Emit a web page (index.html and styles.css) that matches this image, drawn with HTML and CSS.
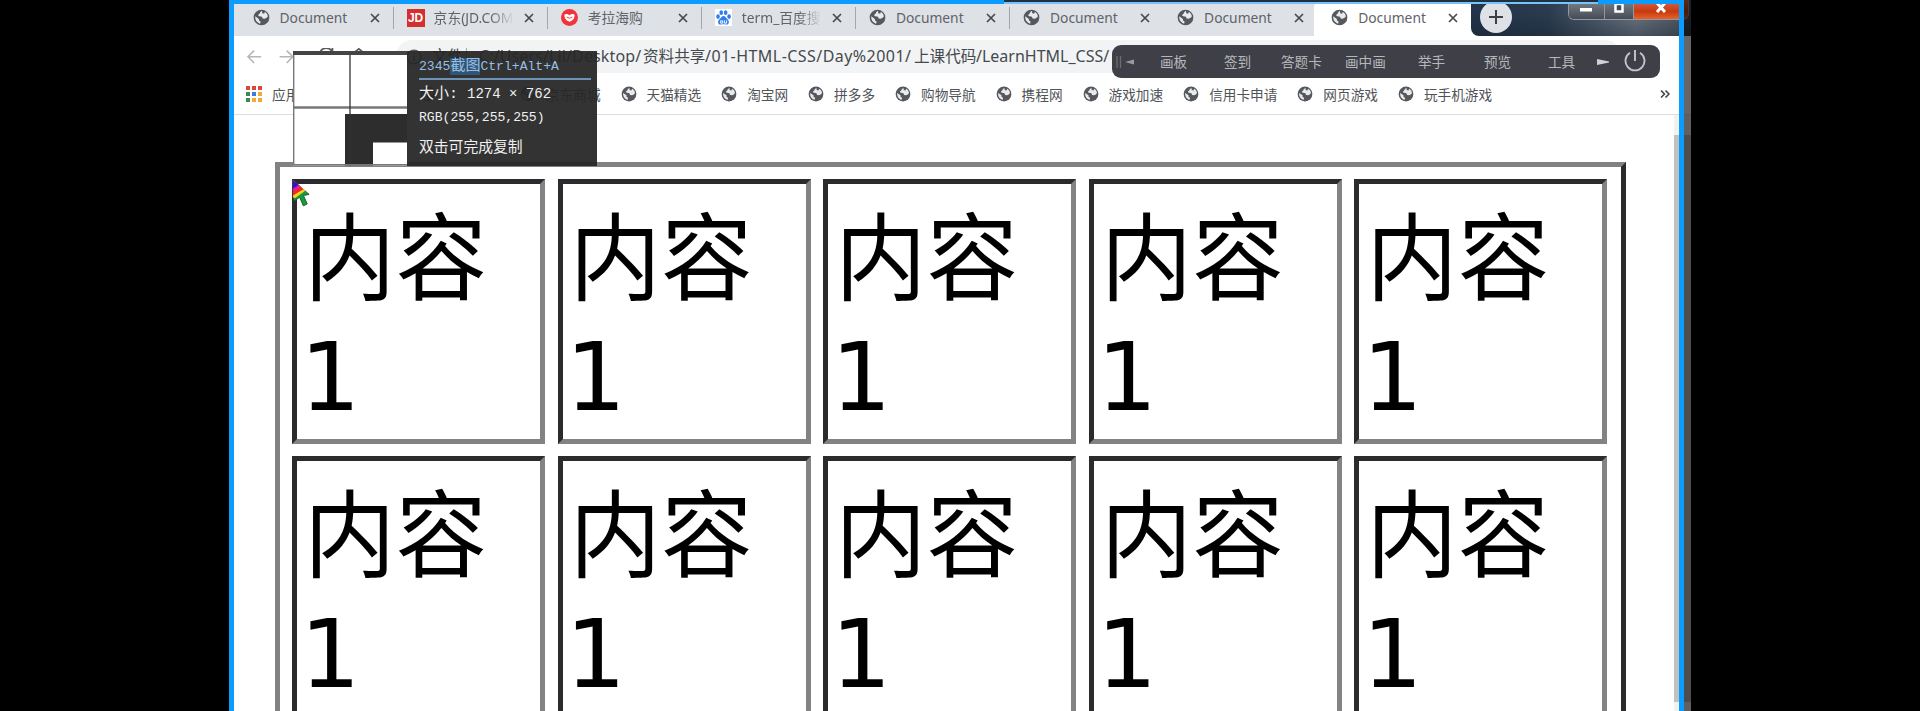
FILE: index.html
```html
<!DOCTYPE html>
<html lang="zh">
<head>
<meta charset="utf-8">
<title>Document</title>
<link rel="stylesheet" href="styles.css">
</head>
<body>
<svg width="0" height="0" class="defs">
  <symbol id="globe" viewBox="0 0 18 18"><circle cx="9" cy="9" r="8.3" fill="#55585c"/><path d="M9.500 2.200C7 3 7.600 5 6.300 5.600 5 6.200 5.400 7.500 6.800 7.600L9.500 8.200 10.200 10 12.500 10.300C14.500 9.500 15.500 9 15.700 7.500 15.300 5 13.500 3.500 12.500 3.200L11.800 5 9.800 4.600ZM2.400 7.800C2 11.500 4.200 14.700 7.600 15.500L8 13.200 6.300 12.300 6.200 10.500Z" fill="#e8eaed"/></symbol>
  <symbol id="x" viewBox="0 0 10 10"><path d="M1 1L9 9M9 1L1 9" stroke="#46494d" stroke-width="1.700"/></symbol>
</svg>
<div class="screen">
  <div class="desktop">
    <div class="tabs">
      <div class="tab"><svg class="fav"><use href="#globe"/></svg><span class="tt">Document</span><svg class="close"><use href="#x"/></svg></div>
      <div class="tab"><span class="fav jd">JD</span><span class="tt fade">京东(JD.COM)</span><svg class="close"><use href="#x"/></svg></div>
      <div class="tab"><svg class="fav" viewBox="0 0 18 18"><circle cx="9" cy="9" r="9" fill="#f1333b"/><path d="M3.500 6Q6 4.500 9 6.500 12 4.500 14.500 6 14.500 12 9 13.500 3.500 12 3.500 6Z" fill="#fff"/><path d="M6 8.500Q9 11 12 8.500" stroke="#f1333b" fill="none"/></svg><span class="tt">考拉海购</span><svg class="close"><use href="#x"/></svg></div>
      <div class="tab"><svg class="fav" viewBox="0 0 18 18"><path fill="#fff" d="M0 0H18V18H0Z"/><g fill="#2f7df0"><ellipse cx="3.200" cy="8" rx="1.900" ry="2.500"/><ellipse cx="6.600" cy="3.900" rx="1.900" ry="2.500"/><ellipse cx="11.300" cy="3.900" rx="1.900" ry="2.500"/><ellipse cx="14.900" cy="8" rx="1.900" ry="2.500"/><path d="M9 7.300C11 7.300 11.500 9.500 13.500 11 15.500 12.800 15 16.800 11.800 16.500 10 16.200 8 16.200 6.300 16.500 3 16.800 2.500 12.800 4.500 11 6.500 9.500 7 7.300 9 7.300Z"/></g><path d="M6 12.500H8.200V15H6ZM10 12V15H12.300V12" fill="none" stroke="#fff"/></svg><span class="tt fade">term_百度搜</span><svg class="close"><use href="#x"/></svg></div>
      <div class="tab"><svg class="fav"><use href="#globe"/></svg><span class="tt">Document</span><svg class="close"><use href="#x"/></svg></div>
      <div class="tab"><svg class="fav"><use href="#globe"/></svg><span class="tt">Document</span><svg class="close"><use href="#x"/></svg></div>
      <div class="tab last"><svg class="fav"><use href="#globe"/></svg><span class="tt">Document</span><svg class="close"><use href="#x"/></svg></div>
      <div class="tab active"><svg class="fav"><use href="#globe"/></svg><span class="tt">Document</span><svg class="close"><use href="#x"/></svg></div>
      <div class="caption">
        <svg class="newtab" viewBox="0 0 32 32"><circle cx="16" cy="16" r="16" fill="#dee1e6"/><path d="M16 9V23M9 16H23" stroke="#3c4043" stroke-width="2"/></svg>
        <div class="winbtns">
          <span class="wb"><svg viewBox="0 0 14 12"><path d="M1 6H13V9.500H1Z" fill="#fff"/></svg></span>
          <span class="wb"><svg viewBox="0 0 14 12"><path d="M3.500 2H10.500V9.500H3.500Z" fill="#444b55" stroke="#fff" stroke-width="2.500"/></svg></span>
          <span class="wb red"><svg viewBox="0 0 14 12"><path d="M3 1L11 10M11 1L3 10" stroke="#fff" stroke-width="3"/></svg></span>
        </div>
      </div>
    </div>
    <div class="address">
      <svg class="nav" viewBox="0 0 170 20"><g fill="none" stroke="#b4b6b9" stroke-width="1.800"><path d="M17 10H2M9 3L2 10 9 17"/><path d="M38 10H53M46 3L53 10 46 17"/></g><g fill="none" stroke="#55585c" stroke-width="2"><path d="M97 3A8 8 0 1 0 98 12M98 0V6H92"/><path d="M118 9L128 1 138 9M121 8V17H135V8"/></g></svg>
      <div class="omnibox">
        <svg class="info" viewBox="0 0 16 16"><circle cx="8" cy="8" r="6.800" fill="none" stroke="#55585c" stroke-width="1.600"/><path d="M8 7V12M8 4V5.600" stroke="#55585c" stroke-width="1.700"/></svg>
        <span class="file">文件</span><span class="bar"></span>
        <span class="u1">C:/Users/Lil/Desktop/</span><span class="u2">资料共享</span><span class="u3">/01-HTML-CSS/Day%2001/</span><span class="u4">上课代码</span><span class="u5">/LearnHTML_CSS/</span>
      </div>
      <svg class="dots" viewBox="0 0 4 16"><path d="M0 0H3.500V3.500H0ZM0 6H3.500V9.500H0ZM0 12H3.500V15.500H0Z" fill="#55585c"/></svg>
    </div>
    <div class="bookmarks">
      <div class="bm apps"><svg viewBox="0 0 16 16"><path d="M0 0h4v4H0ZM6 0h4v4H6ZM12 0h4v4h-4Z" fill="#d9483b"/><path d="M0 6h4v4H0ZM0 12h4v4H0Z" fill="#3b8a54"/><path d="M6 6h4v4H6Z" fill="#3a7de0"/><path d="M12 6h4v4h-4ZM6 12h4v4H6ZM12 12h4v4h-4Z" fill="#efaa38"/></svg>应用</div>
      <div class="bm"><svg><use href="#globe"/></svg></div>
      <div class="bm jdm"><svg><use href="#globe"/></svg>京东商城</div>
      <div class="bm"><svg><use href="#globe"/></svg>天猫精选</div>
      <div class="bm"><svg><use href="#globe"/></svg>淘宝网</div>
      <div class="bm"><svg><use href="#globe"/></svg>拼多多</div>
      <div class="bm"><svg><use href="#globe"/></svg>购物导航</div>
      <div class="bm"><svg><use href="#globe"/></svg>携程网</div>
      <div class="bm"><svg><use href="#globe"/></svg>游戏加速</div>
      <div class="bm"><svg><use href="#globe"/></svg>信用卡申请</div>
      <div class="bm"><svg><use href="#globe"/></svg>网页游戏</div>
      <div class="bm"><svg><use href="#globe"/></svg>玩手机游戏</div>
      <svg class="more" viewBox="0 0 10 8"><path d="M1 .5L4.500 4 1 7.500M5.500 .5L9 4 5.500 7.500" fill="none" stroke="#3c4043" stroke-width="1.500"/></svg>
    </div>
    <div class="page">
      <div class="grid">
        <div class="cell"><p>内容</p><p class="n">1</p></div>
        <div class="cell"><p>内容</p><p class="n">1</p></div>
        <div class="cell"><p>内容</p><p class="n">1</p></div>
        <div class="cell"><p>内容</p><p class="n">1</p></div>
        <div class="cell"><p>内容</p><p class="n">1</p></div>
        <div class="cell"><p>内容</p><p class="n">1</p></div>
        <div class="cell"><p>内容</p><p class="n">1</p></div>
        <div class="cell"><p>内容</p><p class="n">1</p></div>
        <div class="cell"><p>内容</p><p class="n">1</p></div>
        <div class="cell"><p>内容</p><p class="n">1</p></div>
      </div>
      <div class="scroll"><div class="thumb"></div></div>
    </div>

    <div class="shade"></div>
    <div class="frame"></div>
    <div class="topline"></div>

    <div class="magnifier">
      <svg class="lens" viewBox="0 0 114 114"><path d="M0 0H114V114H0Z" fill="#fff"/><path d="M52 62.500H114V91H80V114H52Z" fill="#2d2d2d"/><path d="M0 56H114" stroke="#777" stroke-width="2.500"/><path d="M57 0V114" stroke="#333" stroke-width="1.300"/><path d="M.6 0V114M0 113.300H114" fill="none" stroke="#777" stroke-width="1.600"/><path d="M0 1.500H114" stroke="#444" stroke-width="4"/></svg>
      <div class="tip">
        <p class="t1">2345<b>截图</b>Ctrl+Alt+A</p>
        <p class="t2">大小: <span>1274 × 762</span></p>
        <p class="t3">RGB(255,255,255)</p>
        <p class="t4">双击可完成复制</p>
      </div>
    </div>
    <svg class="cursor" viewBox="0 0 20 30"><path d="M1 1L18 16 12 17 16 26 12 28 8 19 2 23Z" fill="#169b3d" stroke="#155c28"/><path d="M1 1L14 12 3 20 1 19Z" fill="#f5d020"/><path d="M1 1L12 10.500 1 17Z" fill="#f0281e"/><path d="M1 1L9.500 8.500 1 13Z" fill="#e418b0"/><path d="M1 1L7 6 1 10Z" fill="#2a18c8"/></svg>

    <div class="toolbar">
      <svg class="grip" viewBox="0 0 20 12"><path d="M1 0V12M4.500 0V12" stroke="#6b6c72" stroke-width="1.300"/><path d="M9 6L18 3.500V8.500Z" fill="#9a9ba0"/></svg>
      <span class="w1">画板</span><span class="w2">签到</span><span class="w3">答题卡</span><span class="w4">画中画</span><span class="w5">举手</span><span class="w6">预览</span><span class="w7">工具</span>
      <svg class="play" viewBox="0 0 12 8"><path d="M0 1L12 3.500V4.500L0 7Z" fill="#d0d1d4"/></svg>
      <svg class="power" viewBox="0 0 22 22"><path d="M6 2.800A9.500 9.500 0 1 0 16 2.800M11 0V11" fill="none" stroke="#c4c5c9" stroke-width="1.900"/></svg>
    </div>
  </div>
</div>
</body>
</html>
```

FILE: styles.css
```css
* { box-sizing: border-box; }
body { margin: 0; background: #000; overflow: hidden; font-family: "Noto Sans", "Noto Sans CJK SC", sans-serif; }
p { margin: 0; }
.defs { position: absolute; }
.screen { height: 711px; padding-left: 229px; }
.desktop { position: relative; width: 1462px; height: 711px; background: #fff; overflow: hidden; display: flex; flex-direction: column; }

.tabs { display: flex; height: 36px; background: #dee1e6; padding-left: 6px; flex: none; }
.tab { width: 154.100px; height: 36px; display: flex; align-items: center; padding: 0 13px 1px 17.500px; position: relative; flex: none; }
.tab:not(.last):not(.active)::after { content: ""; position: absolute; right: -5px; top: 7px; width: 1.500px; height: 22px; background: #a3a6ab; }
.tab.active { background: #fff; width: 157px; border-radius: 8px 8px 0 0; }
.fav { width: 17px; height: 17px; flex: none; margin-right: 10px; }
.jd { background: #d42f2c; color: #fff; font: bold 12px/18px "Liberation Sans", sans-serif; text-align: center; width: 18px; height: 18px; margin-right: 9px; }
.tt { width: 80px; font: 13.800px/20px "Noto Sans", "Noto Sans CJK SC", sans-serif; color: #606368; white-space: nowrap; overflow: hidden; flex: none; padding-top: 1px; }
.fade { -webkit-mask-image: linear-gradient(90deg, #000 70%, transparent 100%); mask-image: linear-gradient(90deg, #000 70%, transparent 100%); }
.close { width: 10px; height: 10px; margin-left: 10px; flex: none; }

.caption { flex: 1; height: 36px; background: linear-gradient(180deg, #141e2b00 30%, #141e2b66), linear-gradient(90deg, #22344a, #2b3c50 35%, #6d7784 75%, #4a535f); border-radius: 0 0 0 8px; display: flex; align-items: flex-start; }
.tabs { background: linear-gradient(90deg, #dee1e6 1230px, #fff 1230px); }
.tab.last { background: linear-gradient(#fff 0 0) right / 20px 100% no-repeat; }
.tab.last::before { content: ""; position: absolute; z-index: -1; inset: 0; }
.tab.last { background: #dee1e6; border-radius: 0 0 8px 0; }
.newtab { width: 32px; height: 32px; margin: 1px 0 0 9px; }
.winbtns { display: flex; margin-left: 56px; height: 20px; border: 1px solid #9298a0; border-top: 0; border-radius: 0 0 6px 6px; overflow: hidden; }
.wb { width: 36px; display: flex; align-items: center; justify-content: center; background: linear-gradient(#7b828b, #454c57); border-right: 1px solid #9298a0; }
.wb:nth-child(2) { width: 29px; }
.wb.red { width: 54px; background: linear-gradient(#d9664d, #c73a10 60%, #e5622a); border: 0; }
.wb svg { width: 14px; height: 12px; margin-top: -3px; }

.address { height: 40px; display: flex; align-items: center; padding-left: 17px; flex: none; }
.nav { width: 150px; height: 17.600px; margin-top: 2px; flex: none; }
.omnibox { display: flex; align-items: center; height: 33px; width: 1225px; border-radius: 17px; background: #f1f3f4; padding: 1px 0 0 10px; font-size: 16px; line-height: 33px; color: #46494d; white-space: nowrap; }
.info { width: 16px; height: 16px; margin-right: 10px; }
.file { width: 34px; font-size: 15.500px; }
.bar { width: 1px; height: 17px; background: #aaa; margin-right: 12px; }
.u1 { width: 164px; letter-spacing: .12px; }
.u2 { width: 62px; font-size: 15.600px; }
.u3 { width: 209px; letter-spacing: .45px; }
.u4 { width: 62px; font-size: 15.600px; }
.dots { width: 4px; height: 15px; margin-left: 33px; margin-top: 4px; }

.bookmarks { height: 39px; display: flex; align-items: center; padding: 0 16px 2px 17px; gap: 20px; font: 13.650px/20px "Noto Sans CJK SC", sans-serif; color: #505357; border-bottom: 1px solid #dcdee2; flex: none; }
.bm { display: flex; gap: 10px; align-items: center; white-space: nowrap; }
.bm svg { width: 16px; height: 16px; }
.apps { width: 154px; }
.jdm { margin-left: 64px; }
.more { width: 10px; height: 8px; margin-left: auto; margin-right: 5px; }

.page { flex: 1; display: flex; justify-content: space-between; overflow: hidden; }
.grid { display: grid; grid-template-columns: repeat(5, 253.300px); grid-auto-rows: 264.500px; gap: 12px 12.250px; margin: 47px 0 0 46px; padding: 12px 12px 0 12px; height: 860px; border: 5px solid #828282; border-right-color: #2b2b2d; width: 1351px; flex: none; }
.cell { border: 5px solid; border-color: #2b2b2d #848284 #848284 #2b2b2d; padding-left: 7px; padding-top: 4px; color: #000; }
.cell p { font: 91.500px/126px "Noto Sans CJK SC", sans-serif; height: 126px; transform: scaleY(1.045); }
.cell .n { font: 95px/126px "DejaVu Sans", sans-serif; margin-left: -4px; transform: none; }
.scroll { width: 17px; background: #f1f1f1; padding-top: 20px; }
.thumb { height: 567px; background: #c1c1c1; }

.shade { position: absolute; left: 1454px; top: 0; width: 8px; height: 711px; background: rgba(0,0,0,.6); }
.frame { position: absolute; left: 0; top: 0; width: 1455px; height: 720px; border: 5.500px solid #0a9cff; border-top-width: 4px; }
.topline { position: absolute; left: 775px; top: 0; width: 594px; height: 4px; background: #203044; border-bottom: 2px solid #77c4f5; }

.magnifier { position: absolute; left: 64px; top: 51px; display: flex; height: 115px; }
.lens { width: 114px; height: 115px; }
.tip { width: 190px; background: rgba(38,38,38,.94); padding: 6px 6px 0 12px; font: 13.080px/21px "Liberation Mono", "Noto Sans CJK SC", monospace; color: #f0f0f0; white-space: nowrap; }
.t1 { color: #96bfe3; border-bottom: 2px solid #6d94b8; height: 23px; line-height: 20px; }
.t1 b { font-weight: normal; font-size: 15px; background: #315574; }
.t2 { padding-top: 4px; height: 26px; font-size: 15px; }
.t2 span { font-size: 14px; }
.t3 { height: 23px; line-height: 23px; }
.t4 { padding-top: 9px; font-size: 14.800px; }
.cursor { position: absolute; left: 63px; top: 179px; width: 19px; height: 29px; }

.toolbar { position: absolute; left: 883px; top: 45px; width: 548px; height: 33px; border-radius: 9px; background: #3f4047; display: flex; align-items: center; padding-left: 4px; font: 13.600px/33px "Noto Sans CJK SC", sans-serif; color: #b6b7bc; white-space: nowrap; }
.toolbar span { flex: none; }
.grip { width: 20px; height: 12px; margin-right: 24px; }
.w1 { width: 64px; } .w2 { width: 57px; } .w3 { width: 64px; } .w4 { width: 73px; } .w5 { width: 66px; } .w6 { width: 64px; } .w7 { width: 49px; }
.play { width: 12px; height: 8px; margin-right: 15px; }
.power { width: 22px; height: 22px; margin-top: -1px; }
```
